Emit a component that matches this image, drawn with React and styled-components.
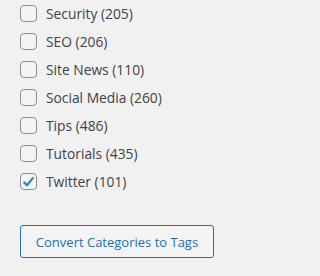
import styled, { createGlobalStyle } from "styled-components";

const Global = createGlobalStyle`
  html, body {
    margin: 0;
    padding: 0;
    background: #f1f1f1;
  }
  body {
    font-family: "Open Sans", "Liberation Sans", sans-serif;
    color: #3c434a;
  }
`;

const CATEGORIES = [
  { name: "Security", count: 205 },
  { name: "SEO", count: 206 },
  { name: "Site News", count: 110 },
  { name: "Social Media", count: 260 },
  { name: "Tips", count: 486 },
  { name: "Tutorials", count: 435 },
  { name: "Twitter", count: 101, checked: true },
];

const Wrap = styled.div`
  padding: 0 20px;
`;

const List = styled.ul`
  list-style: none;
  margin: 0;
  padding: 0;
  display: flex;
  flex-direction: column;
  gap: 2px;
`;

const Row = styled.li`
  height: 26px;
  display: flex;
  align-items: center;
  gap: 9px;
  font-size: 13.8px;
`;

const Box = styled.span`
  box-sizing: border-box;
  width: 17px;
  height: 17px;
  border: 1px solid #8c8f94;
  border-radius: 4px;
  background: #f3f3f3;
  display: flex;
  align-items: center;
  justify-content: center;
  flex: none;
`;

const Button = styled.button`
  box-sizing: border-box;
  margin-top: 31px;
  width: 194px;
  height: 33px;
  padding: 0;
  white-space: nowrap;
  border: 1px solid #2271b1;
  border-radius: 3px;
  background: #f4f4f4;
  color: #2271b1;
  font-family: "Open Sans", "Liberation Sans", sans-serif;
  font-size: 13px;
  cursor: pointer;
`;

const Check = () => (
  <svg width="15" height="15" viewBox="0 0 20 20">
    <path
      d="M3.5 10.5 L8 15 L16.5 4.5"
      fill="none"
      stroke="#3582c4"
      strokeWidth="3"
      strokeLinejoin="round"
    />
  </svg>
);

export default function App() {
  return (
    <Wrap>
      <Global />
      <List>
        {CATEGORIES.map((c) => (
          <Row key={c.name}>
            <Box>{c.checked && <Check />}</Box>
            <span>
              {c.name} ({c.count})
            </span>
          </Row>
        ))}
      </List>
      <Button>Convert Categories to Tags</Button>
    </Wrap>
  );
}
